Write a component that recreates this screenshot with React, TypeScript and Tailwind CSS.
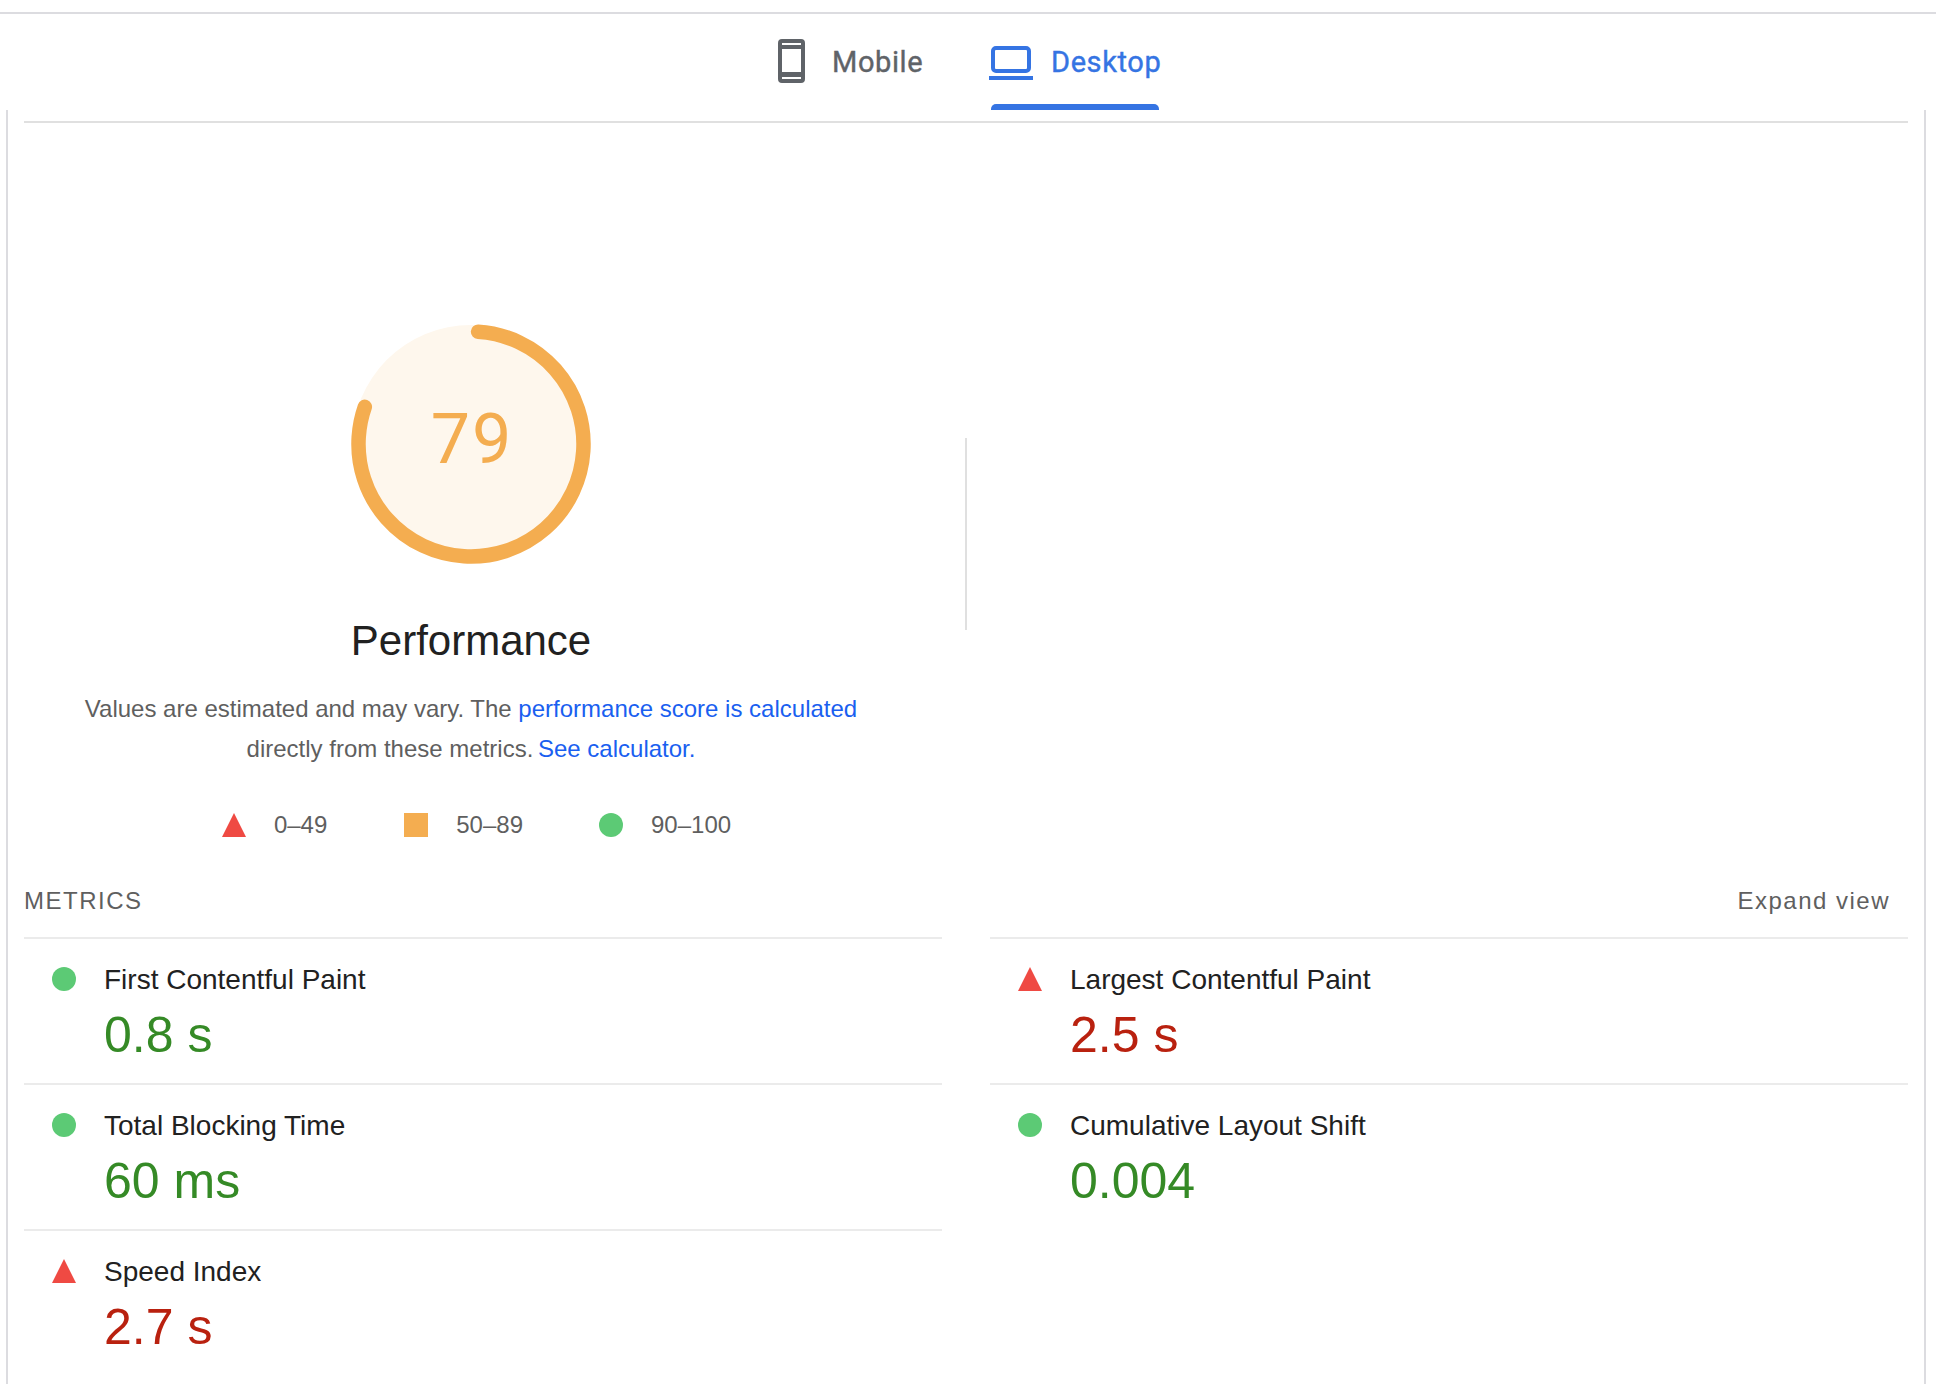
import React from 'react';

type Rating = 'good' | 'poor';

const metrics: { label: string; value: string; rating: Rating }[] = [
    { label: 'First Contentful Paint', value: '0.8 s', rating: 'good' },
    { label: 'Largest Contentful Paint', value: '2.5 s', rating: 'poor' },
    { label: 'Total Blocking Time', value: '60 ms', rating: 'good' },
    { label: 'Cumulative Layout Shift', value: '0.004', rating: 'good' },
    { label: 'Speed Index', value: '2.7 s', rating: 'poor' },
];

function Triangle() {
    return (
        <svg width="24" height="24" viewBox="0 0 24 24" className="shrink-0 block">
            <polygon points="12,0 24,24 0,24" fill="#ef4a43" />
        </svg>
    );
}

function Dot() {
    return <div className="w-[24px] h-[24px] shrink-0 rounded-full bg-[#5cca75]" />;
}

function MetricRow({ label, value, rating }: { label: string; value: string; rating: Rating }) {
    return (
        <div className="border-t-2 border-[#ebebeb] h-[146px] pt-[23px] pl-[28px] flex gap-[28px]">
            <div className="mt-[5px]">{rating === 'good' ? <Dot /> : <Triangle />}</div>
            <div>
                <div className="text-[28px] leading-[36px] text-[#212121]">{label}</div>
                <div className={`mt-[9px] text-[50px] leading-[56px] ${rating === 'good' ? 'text-[#358a26]' : 'text-[#b9210f]'}`}>
                    {value}
                </div>
            </div>
        </div>
    );
}

export default function App() {
    return (
        <div className="w-[1936px] h-[1384px] overflow-hidden bg-white font-['Liberation_Sans',Arial,sans-serif] flex flex-col">
            <div className="h-[14px] shrink-0 border-b-2 border-[#dcdce0]" />

            {/* tabs */}
            <nav className="h-[96px] shrink-0 flex justify-center gap-[69px] pl-[1px] font-['Roboto',sans-serif] font-normal [-webkit-text-stroke:0.4px] text-[29px] leading-[34px] tracking-[0.6px]">
                <div className="w-[144px] h-[90px] pt-[4px] flex items-center gap-[27px] text-[#5f6368]">
                    <svg width="27" height="44" viewBox="0 0 27 44" className="shrink-0 block">
                        <path
                            fillRule="evenodd"
                            fill="#5f6368"
                            d="M4 0h19a4 4 0 0 1 4 4v36a4 4 0 0 1-4 4H4a4 4 0 0 1-4-4V4a4 4 0 0 1 4-4zM4 4v2h19V4zM4 10v23h19V10zM4 38v2h19v-2z"
                        />
                    </svg>
                    <span className="mt-[1px]">Mobile</span>
                </div>
                <div className="w-[168px] text-[#3574e3]">
                    <div className="h-[90px] pt-[4px] flex items-center gap-[18px] whitespace-nowrap">
                        <svg width="44" height="34" viewBox="0 0 44 34" className="shrink-0 block -ml-[2px] mt-[4px]">
                            <rect x="4" y="2" width="36" height="23" rx="3" fill="none" stroke="#3574e3" strokeWidth="4" />
                            <rect x="0" y="30" width="44" height="4" fill="#3574e3" />
                        </svg>
                        <span className="mt-[1px]">Desktop</span>
                    </div>
                    <div className="h-[6px] bg-[#3574e3] rounded-t-[5px]" />
                </div>
            </nav>

            {/* report panel */}
            <div className="flex-1 ml-[6px] mr-[10px] px-[16px] border-x-2 border-[#dcdce0] pt-[11px]">
                <div className="border-t-2 border-[#e0e0e0]">
                    <div className="flex">
                        <div className="w-[894px] flex flex-col items-center pt-[201px]">
                            <div className="relative w-[240px] h-[240px]">
                                <svg width="240" height="240" viewBox="0 0 240 240" className="block">
                                    <circle cx="120" cy="120" r="119" fill="#fef7ed" />
                                    <circle
                                        cx="120"
                                        cy="120"
                                        r="112.5"
                                        fill="none"
                                        stroke="#f4ad50"
                                        strokeWidth="14.5"
                                        strokeLinecap="round"
                                        strokeDasharray="560.4 706.9"
                                        transform="rotate(-86.4 120 120)"
                                    />
                                </svg>
                                <div className="absolute inset-0 flex items-center justify-center pb-[10px] pl-[2px] font-['Roboto',sans-serif] text-[70px] leading-none tracking-[2px] text-[#f4ad50]">
                                    79
                                </div>
                            </div>
                            <h2 className="mt-[52px] text-[42px] leading-[50px] text-[#212121]">Performance</h2>
                            <p className="mt-[23px] text-[24px] leading-[40px] text-[#5f5f5f] text-center whitespace-nowrap">
                                Values are estimated and may vary. The <a className="text-[#1a5ff0]">performance score is calculated</a>
                                <br />
                                directly from these metrics. <a className="-ml-[2px] text-[#1a5ff0]">See calculator.</a>
                            </p>
                            <div className="mt-[44px] pl-[11px] flex gap-[76px] text-[24px] leading-[24px] text-[#5f5f5f]">
                                <div className="flex gap-[28px]">
                                    <Triangle />
                                    <span>0–49</span>
                                </div>
                                <div className="ml-[1px] flex gap-[28px]">
                                    <div className="w-[24px] h-[24px] bg-[#f4ad50]" />
                                    <span>50–89</span>
                                </div>
                                <div className="flex gap-[28px]">
                                    <Dot />
                                    <span>90–100</span>
                                </div>
                            </div>
                        </div>
                        <div className="ml-[47px] mt-[315px] w-[2px] h-[192px] bg-[#e0e0e0]" />
                    </div>

                    <div className="mt-[48px] mb-[20px] flex justify-between pr-[18px] text-[24px] leading-[32px] tracking-[1.5px] text-[#5f5f5f]">
                        <span>METRICS</span>
                        <span>Expand view</span>
                    </div>

                    <div className="grid grid-cols-2 gap-x-[48px]">
                        {metrics.map((m) => (
                            <MetricRow key={m.label} {...m} />
                        ))}
                    </div>
                </div>
            </div>
        </div>
    );
}
